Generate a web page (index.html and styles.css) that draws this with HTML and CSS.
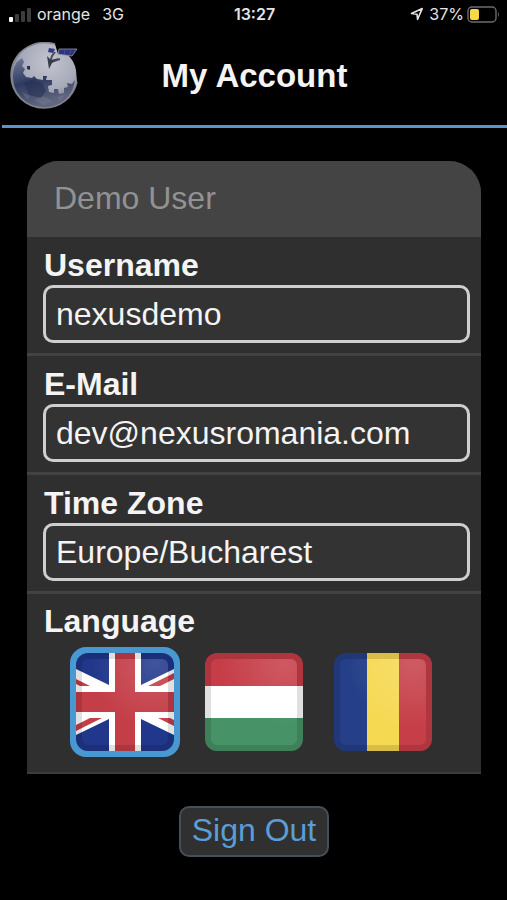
FILE: index.html
```html
<!DOCTYPE html>
<html lang="en">
<head>
    <meta charset="UTF-8">
    <meta name="viewport" content="width=device-width, initial-scale=1">
    <title>My Account</title>
    <link rel="stylesheet" href="styles.css">
</head>
<body>
    <div class="status-bar">
        <div class="status-left">
            <svg class="signal" viewBox="0 0 23 15" aria-hidden="true">
                <rect x="0" y="10" width="4" height="5" rx="1" fill="#fff"/>
                <rect x="6" y="7" width="4" height="8" rx="1" fill="#3c3c3c"/>
                <rect x="12" y="4" width="4" height="11" rx="1" fill="#3c3c3c"/>
                <rect x="18" y="1" width="4" height="14" rx="1" fill="#3c3c3c"/>
            </svg>
            <span>orange</span>
            <span class="network">3G</span>
        </div>
        <div class="status-time">13:27</div>
        <div class="status-right">
            <svg class="location" viewBox="0 0 14 14" aria-hidden="true">
                <path d="M1.5 6.5 L12.2 1.6 L7.6 12.3 L7 7.2 Z" fill="none" stroke="#e4e4e4" stroke-width="1.6" stroke-linejoin="round"/>
            </svg>
            <span>37%</span>
            <svg class="battery" viewBox="0 0 33 17" aria-hidden="true">
                <rect x="1" y="1" width="28" height="15" rx="4" fill="none" stroke="#6c6c6c" stroke-width="1.4"/>
                <rect x="3" y="3" width="9" height="11" rx="2" fill="#f8d84a"/>
                <path d="M31 6 Q33 8.500 31 11 Z" fill="#6c6c6c"/>
            </svg>
        </div>
    </div>

    <header class="header">
        <svg class="logo" viewBox="0 0 68 68" role="img" aria-label="Nexus">
            <defs>
                <radialGradient id="globe" cx="58%" cy="30%" r="70%">
                    <stop offset="0" stop-color="#c3c5d0"/>
                    <stop offset="0.6" stop-color="#a7aab9"/>
                    <stop offset="1" stop-color="#686b7f"/>
                </radialGradient>
                <linearGradient id="ocean" x1="0" y1="0" x2="0.4" y2="1">
                    <stop offset="0" stop-color="#717b99"/>
                    <stop offset="0.5" stop-color="#2e3a60"/>
                    <stop offset="1" stop-color="#62677f"/>
                </linearGradient>
            </defs>
            <path d="M45 2 C38 0 29 0 22 3 C9 8 1 20 1 33 C1 52 16 66 34 66 C50 66 63 56 67 40 L66 28 C65 22 62 17 58 13 L48 12 Z" fill="url(#globe)"/>
            <!-- puzzle edge of the dark half -->
            <path d="M7 20 L12 16 L14 20 L12 24 L15 27 L13 31 L16 35 L22 36 L24 34 L27 37 L33 38 L33 34 L37 34 L36 38 L42 38 L42 43 L38 44 L39 50 L44 51 L44 47 L48 47 L49 52 L54 51 L54 46 L58 45 L57 41 L62 42 L65 38 C63 55 50 65 34 65 C17 65 3 52 3 34 C3 29 4 24 7 20 Z" fill="url(#ocean)"/>
            <path d="M14 41 L22 38 L32 41 L36 49 L31 56 L19 53 Z" fill="#202b50" opacity="0.5"/>
            <path d="M12 50 L20 54 L17 58 Z M24 58 L33 54 L43 59 L33 63 Z M47 55 L56 52 L50 59 Z" fill="#8287a0" opacity="0.3"/>
            <path d="M17 24 L20 24 L20 28 L17 27 Z" fill="#283154"/>
            <path d="M45 2 C38 0 29 0 22 3 C9 8 1 20 1 33 C1 52 16 66 34 66 C50 66 63 56 67 40" fill="none" stroke="#85828f" stroke-width="1.500"/>
            <!-- satellite -->
            <path d="M39 6 L45 7 L43 11 L38 10 Z" fill="#303982"/>
            <path d="M49 7 L67 7 L62 14 L48 12 Z" fill="#2c347c" stroke="#9294b4" stroke-width="0.8"/>
            <path d="M55 8 L54 13 M61 8 L59 13" stroke="#474e93" stroke-width="1"/>
            <path d="M45 10 L42 14 L40 21 M50 17 L41 20" fill="none" stroke="#4a4e59" stroke-width="2"/>
            <path d="M37 14 L41 18 L49 16 L42 21 L39 27 Z" fill="#383c48"/>
        </svg>
        <h1>My Account</h1>
    </header>

    <main class="content">
        <form class="account">
            <section class="card">
                <h2 class="card-title">Demo User</h2>
                <div class="row">
                    <label for="username">Username</label>
                    <input type="text" id="username" value="nexusdemo">
                </div>
                <div class="row">
                    <label for="email">E-Mail</label>
                    <input type="email" id="email" value="dev@nexusromania.com">
                </div>
                <div class="row">
                    <label for="timezone">Time Zone</label>
                    <input type="text" id="timezone" value="Europe/Bucharest">
                </div>
                <fieldset class="row languages">
                    <legend>Language</legend>
                    <div class="flags">
                        <label class="flag">
                            <input type="radio" name="language" value="en" aria-label="English" checked>
                            <svg viewBox="0 0 98 98" aria-hidden="true">
                                <rect width="98" height="98" fill="#20378b"/>
                                <path d="M0 16 L33 32 V0 H65 V32 L98 16 V82 L65 66 V98 H33 V66 L0 82 Z" fill="#fff"/>
                                <path d="M0 26 L14 33 H4 L0 31 Z M98 20 L72 33 H84 L98 26 Z M0 78 L26 65 H14 L0 72 Z M98 73 L82 65 H94 L98 67 Z" fill="#c43e48"/>
                                <path d="M39 0 H59 V39 H98 V59 H59 V98 H39 V59 H0 V39 H39 Z" fill="#c43e48"/>
                            </svg>
                        </label>
                        <label class="flag">
                            <input type="radio" name="language" value="hu" aria-label="Magyar">
                            <svg viewBox="0 0 98 98" aria-hidden="true">
                                <rect y="32" width="98" height="34" fill="#fff"/>
                                <rect width="98" height="33" fill="#c63d47"/>
                                <rect y="65" width="98" height="33" fill="#479267"/>
                            </svg>
                        </label>
                        <label class="flag">
                            <input type="radio" name="language" value="ro" aria-label="Română">
                            <svg viewBox="0 0 98 98" aria-hidden="true">
                                <rect x="32" width="34" height="98" fill="#f6d953"/>
                                <rect width="33" height="98" fill="#254089"/>
                                <rect x="65" width="33" height="98" fill="#c63f48"/>
                            </svg>
                        </label>
                    </div>
                </fieldset>
            </section>
            <button type="button" class="sign-out">Sign Out</button>
        </form>
    </main>
</body>
</html>
```
FILE: styles.css
```css
* {
    box-sizing: border-box;
}
body {
    margin: 0;
    background-color: #000;
    color: #f4f4f4;
    font-family: "Liberation Sans", Arial, sans-serif;
    font-size: 32px;
    line-height: 36px;
}
/* Status bar */
.status-bar {
    display: grid;
    grid-template-columns: 1fr auto 1fr;
    align-items: center;
    height: 28px;
    padding: 0 7px 0 9px;
    font-family: Inter, "Liberation Sans", sans-serif;
    font-size: 16px;
    line-height: 20px;
    color: #e4e4e4;
}
.status-left,
.status-right {
    display: flex;
    align-items: center;
}
.status-right {
    justify-content: flex-end;
}
.status-time {
    font-weight: 600;
}
.signal {
    width: 23px;
    height: 15px;
    margin-right: 5px;
}
.network {
    margin-left: 12px;
}
.location {
    width: 14px;
    height: 14px;
    margin-right: 5px;
}
.battery {
    width: 33px;
    height: 17px;
    margin-left: 3px;
}
/* Header */
.header {
    display: grid;
    grid-template-columns: 68px 1fr 68px;
    align-items: center;
    margin-left: 2px;
    padding: 14px 8px 15px;
    border-bottom: 3px solid #5c93c8;
}
.logo {
    display: block;
    width: 68px;
    height: 68px;
}
h1 {
    margin: 0;
    font-size: 33px;
    text-align: center;
}
/* Account card */
.content {
    padding: 33px 26px 40px 27px;
}
.account {
    display: flex;
    flex-direction: column;
    align-items: center;
}
.card {
    width: 100%;
    overflow: hidden;
    border-radius: 32px 32px 0 0;
    background-color: #2f2f2f;
}
.card-title {
    margin: 0;
    padding: 19px 27px 21px;
    background-color: #444;
    color: #929292;
    font-size: 32px;
    font-weight: normal;
}
.row {
    display: flex;
    flex-direction: column;
    margin: 0;
    padding: 10px 11px 10px 16px;
    border: 0;
    border-bottom: 3px solid #424242;
}
.row > label,
legend {
    padding: 0 1px 2px;
    font-weight: bold;
}
.row > input {
    width: 100%;
    height: 58px;
    padding: 0 10px;
    border: 3px solid #cfcfcf;
    border-radius: 10px;
    background-color: #333;
    color: #f4f4f4;
    font: inherit;
}
.languages {
    display: block;
    padding: 0 0 15px;
    border-bottom-width: 2px;
    border-bottom-color: #3c3c3c;
}
legend {
    padding: 9px 17px 8px;
}
.flags {
    display: flex;
    justify-content: center;
    gap: 19px;
}
.flag {
    position: relative;
    border: 6px solid transparent;
    border-radius: 16px;
    cursor: pointer;
}
.flag input {
    position: absolute;
    inset: 0;
    margin: 0;
    opacity: 0;
}
.flag svg {
    display: block;
    width: 98px;
    height: 98px;
    border-radius: 12px;
}
/* glossy bevel over the flag */
.flag::after {
    content: "";
    position: absolute;
    inset: 0;
    border: 6px solid rgba(0, 0, 0, 0.12);
    border-radius: 12px;
    background: radial-gradient(circle at 85% 5%, rgba(255, 255, 255, 0.15), transparent 60%) padding-box;
}
.flag:has(input:checked) {
    border-color: #4a98d2;
    background-color: #4a98d2;
}
.sign-out {
    margin-top: 32px;
    padding: 4px 11px 7px;
    border: 2px solid #43505a;
    border-radius: 10px;
    background-color: #303030;
    color: #5b9dd5;
    font: inherit;
    cursor: pointer;
}
```
